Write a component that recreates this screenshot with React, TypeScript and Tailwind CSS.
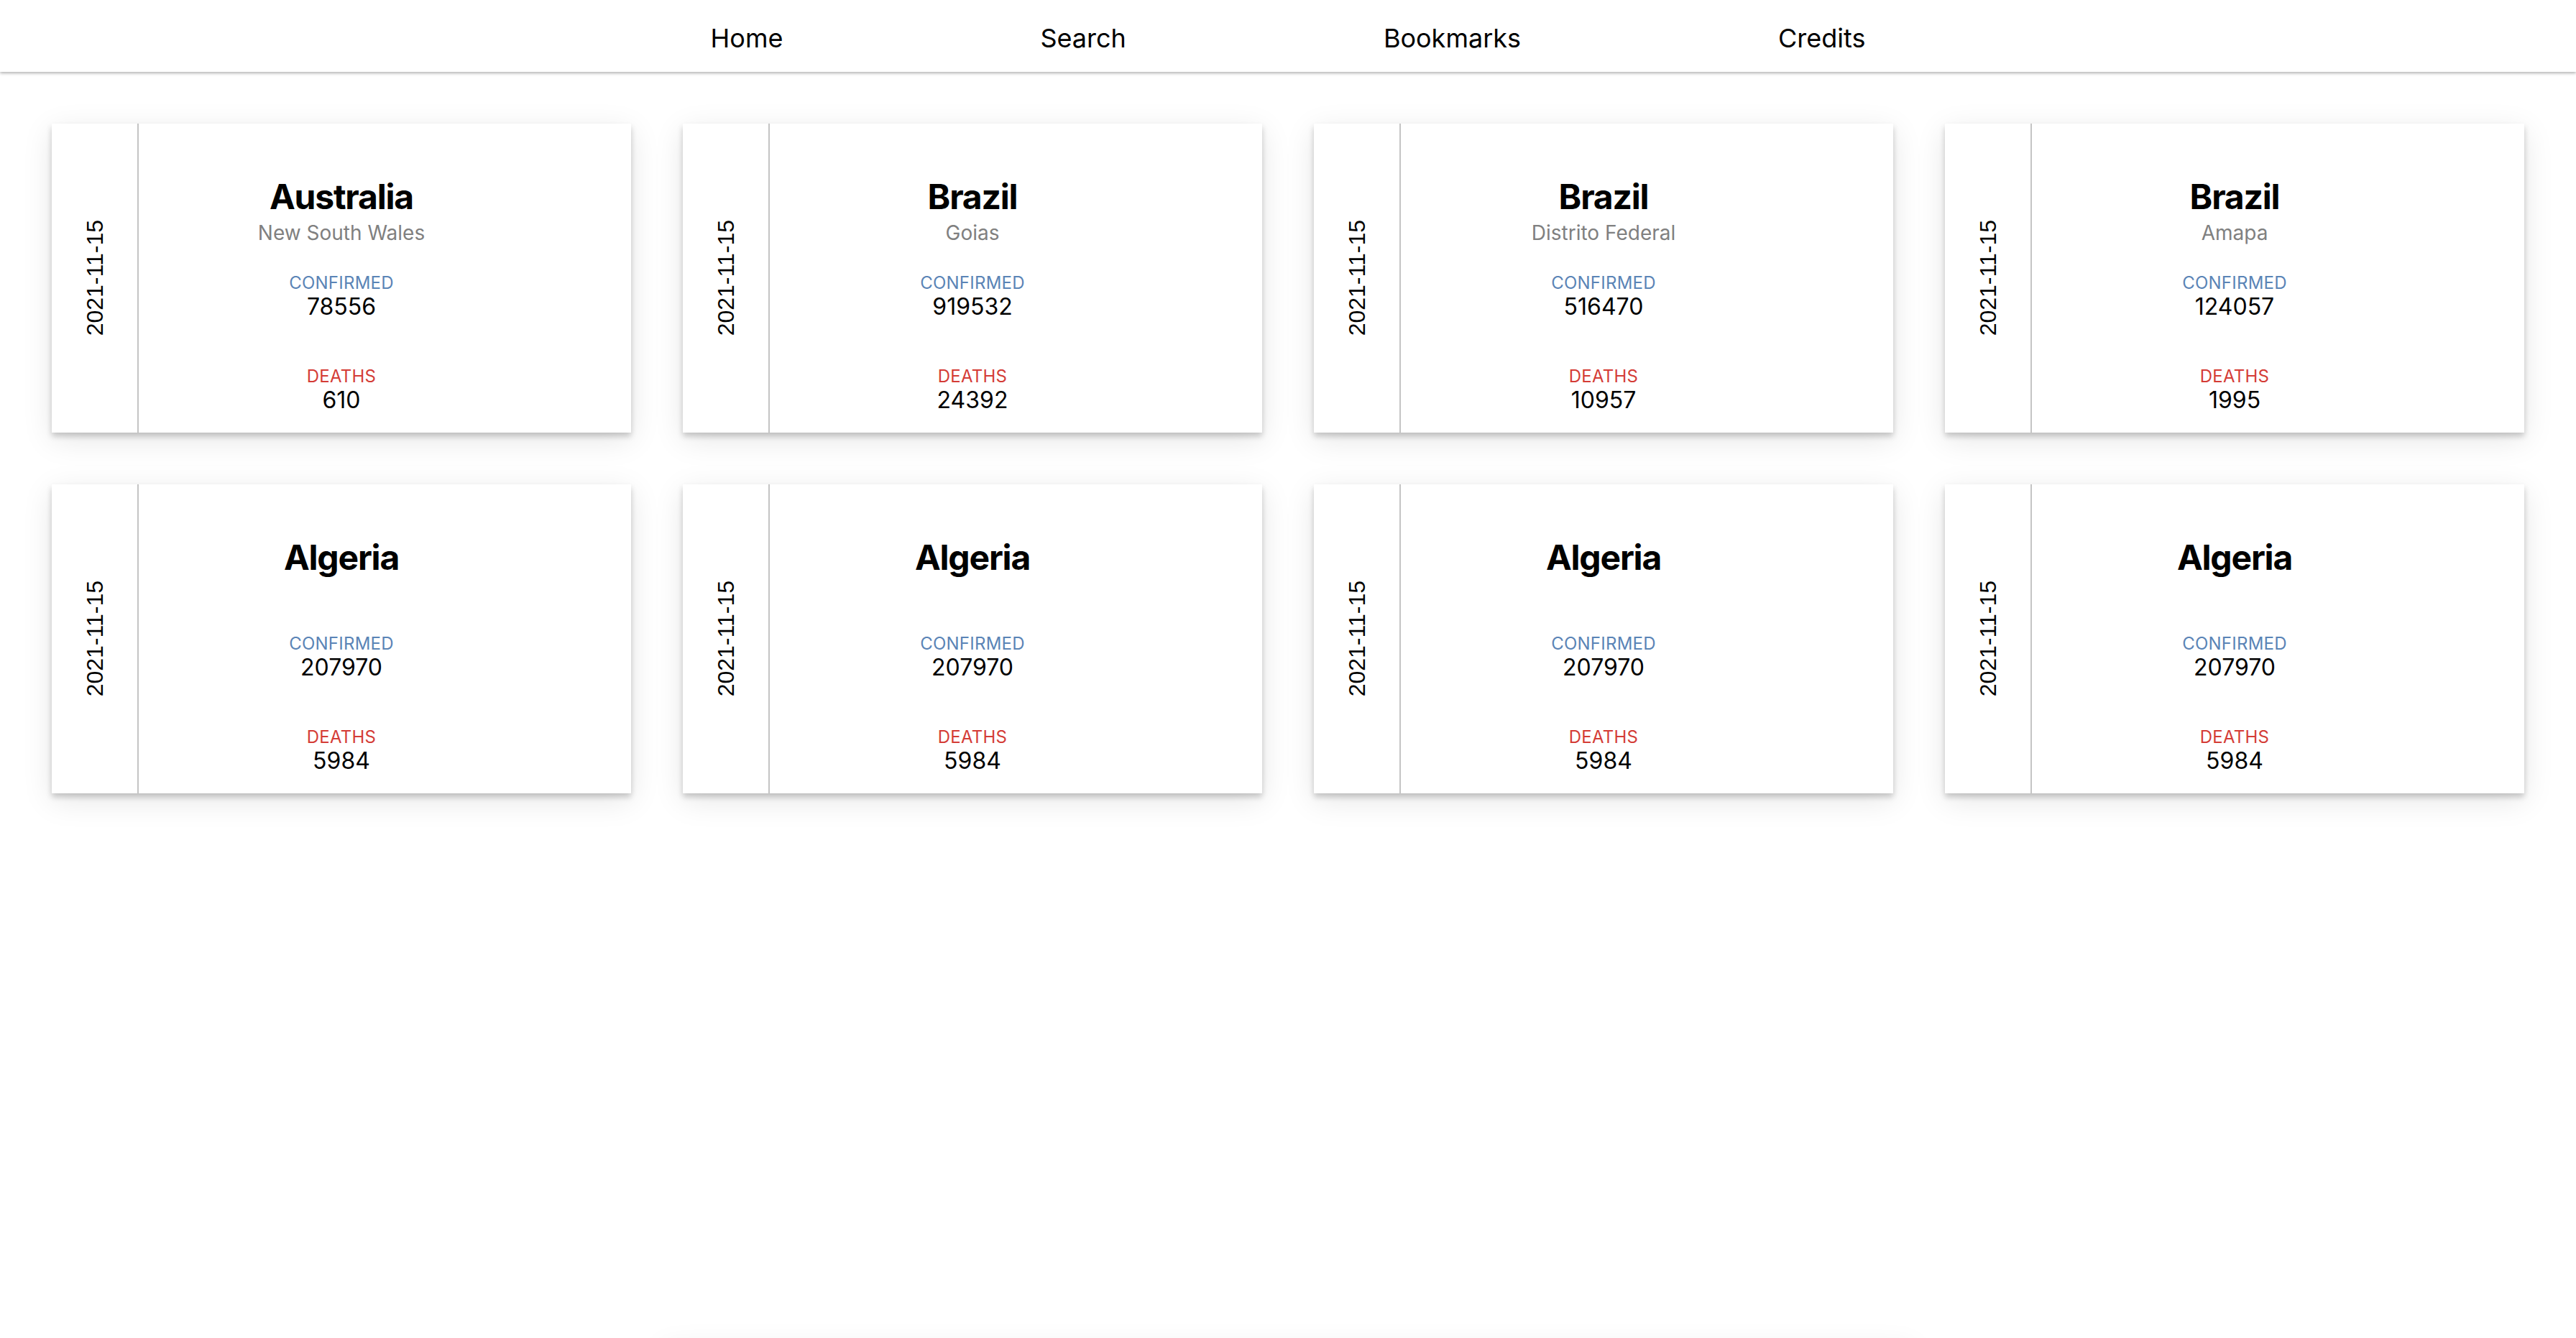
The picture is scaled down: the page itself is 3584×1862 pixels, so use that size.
const records = [
  { date: "2021-11-15", country: "Australia", region: "New South Wales", confirmed: 78556, deaths: 610 },
  { date: "2021-11-15", country: "Brazil", region: "Goias", confirmed: 919532, deaths: 24392 },
  { date: "2021-11-15", country: "Brazil", region: "Distrito Federal", confirmed: 516470, deaths: 10957 },
  { date: "2021-11-15", country: "Brazil", region: "Amapa", confirmed: 124057, deaths: 1995 },
  { date: "2021-11-15", country: "Algeria", region: "", confirmed: 207970, deaths: 5984 },
  { date: "2021-11-15", country: "Algeria", region: "", confirmed: 207970, deaths: 5984 },
  { date: "2021-11-15", country: "Algeria", region: "", confirmed: 207970, deaths: 5984 },
  { date: "2021-11-15", country: "Algeria", region: "", confirmed: 207970, deaths: 5984 },
];

type Rec = (typeof records)[number];

function Nav() {
  return (
    <nav className="flex h-[100px] items-center justify-center gap-[358px] bg-white text-[36px] text-black shadow-[0_2px_4px_rgba(0,0,0,0.3)]">
      {["Home", "Search", "Bookmarks", "Credits"].map((item) => (
        <a key={item} href="#" className="mt-[6px] leading-[44px]">
          {item}
        </a>
      ))}
    </nav>
  );
}

function Card({ rec }: { rec: Rec }) {
  return (
    <div className="relative h-[430px] bg-white shadow-[0_5px_8px_rgba(0,0,0,0.2),0_10px_40px_rgba(0,0,0,0.1)]">
      <div className="absolute inset-y-0 left-0 flex w-[121px] items-center justify-center border-r-2 border-[#c4c4c4]">
        <span className="rotate-180 font-['Liberation_Sans',sans-serif] text-[32px] leading-[32px] [writing-mode:vertical-rl]">
          {rec.date}
        </span>
      </div>
      <div className="flex flex-col items-center pt-[72px] text-center">
        <h2 className="text-[48px] font-bold leading-[60px] tracking-tight">{rec.country}</h2>
        <p className="h-[40px] text-[28px] leading-[40px] text-[#808080]">{rec.region}</p>
        <p className="mt-[36px] text-[24px] leading-[28px] tracking-[0.01em] text-[#5a84b6]">CONFIRMED</p>
        <p className="text-[32px] leading-[38px]">{rec.confirmed}</p>
        <p className="mt-[64px] text-[24px] leading-[28px] tracking-[0.01em] text-[#d43c36]">DEATHS</p>
        <p className="text-[32px] leading-[38px]">{rec.deaths}</p>
      </div>
    </div>
  );
}

export default function App() {
  return (
    <div className="min-h-screen bg-white font-['Inter',sans-serif] text-black">
      <Nav />
      <main className="grid grid-cols-4 gap-[72px] px-[72px] pt-[72px]">
        {records.map((rec, i) => (
          <Card key={i} rec={rec} />
        ))}
      </main>
      <div className="mx-auto mt-[772px] h-[120px] w-[1740px] bg-white shadow-[0_0_40px_rgba(0,0,0,0.08)]" />
    </div>
  );
}
